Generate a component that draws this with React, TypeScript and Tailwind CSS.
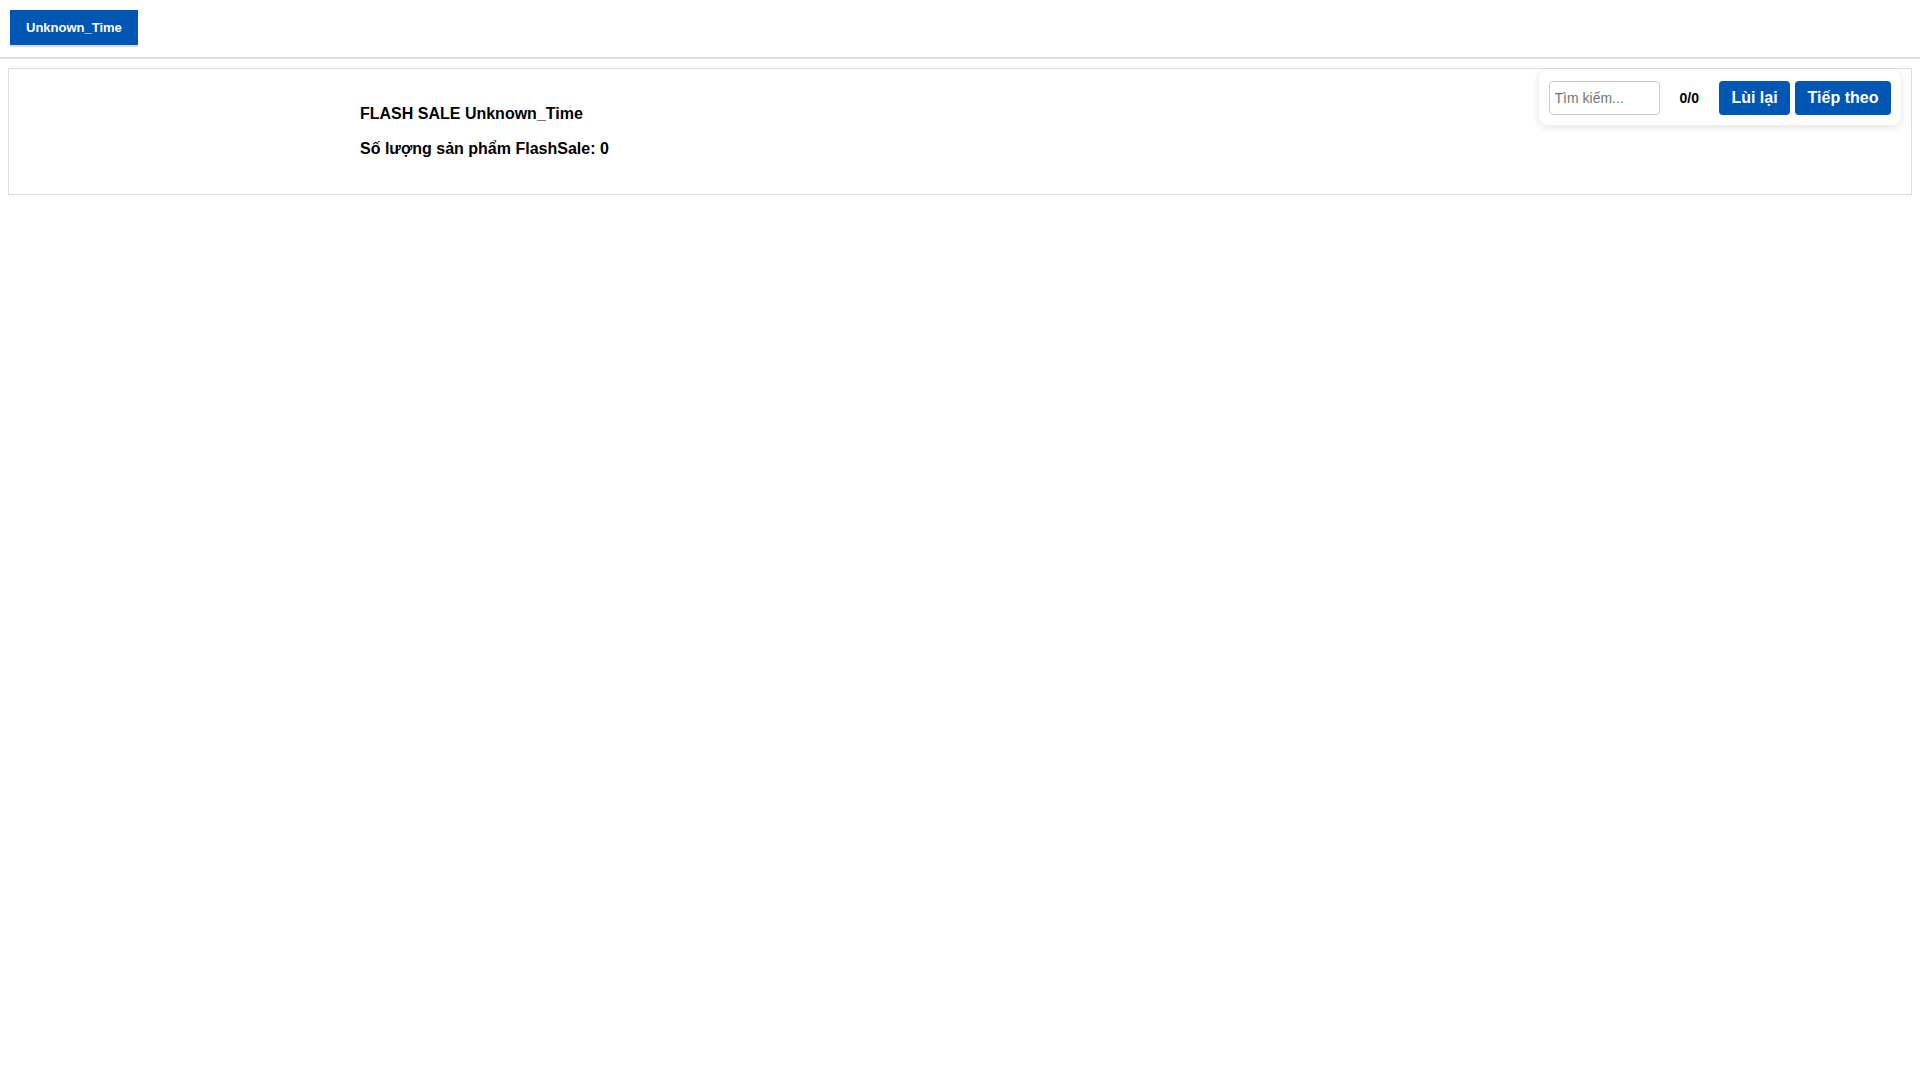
export default function App() {
  return (
    <div className="min-h-screen bg-white font-['Liberation_Sans',Arial,sans-serif] text-black">
      {/* thanh tab thời gian */}
      <div className="flex px-[10px] pt-[10px] pb-[10px] border-b-2 border-[#dddddd]">
        <button className="h-[37px] px-[16px] bg-[#0056b3] text-white text-[13px] font-bold border-b-2 border-[#dddddd] leading-[35px]">
          Unknown_Time
        </button>
      </div>

      <div className="relative mx-[8px] mt-[9px] border border-[#dddddd]">
        <div className="flex flex-col gap-[17px] pt-[36px] pb-[36px] pl-[351px]">
          <p className="text-[16px] font-bold leading-[18px]">FLASH SALE Unknown_Time</p>
          <p className="text-[16px] font-bold leading-[18px]">Số lượng sản phẩm FlashSale: 0</p>
        </div>

        {/* ô tìm kiếm nổi */}
        <div className="absolute top-[2px] right-[10px] flex items-center p-[10px] bg-white rounded-[8px] shadow-[0_2px_8px_rgba(0,0,0,0.12)]">
          <input
            type="text"
            placeholder="Tìm kiếm..."
            className="w-[111px] h-[34px] px-[5px] text-[14px] border border-[#cccccc] rounded-[4px] outline-none placeholder:text-[#757575]"
          />
          <span className="mx-[20px] text-[14px] font-bold">0/0</span>
          <div className="flex gap-[5px]">
            <button className="h-[34px] w-[71px] bg-[#0056b3] text-white text-[16px] font-bold rounded-[4px]">
              Lùi lại
            </button>
            <button className="h-[34px] w-[96px] bg-[#0056b3] text-white text-[16px] font-bold rounded-[4px]">
              Tiếp theo
            </button>
          </div>
        </div>
      </div>
    </div>
  );
}
